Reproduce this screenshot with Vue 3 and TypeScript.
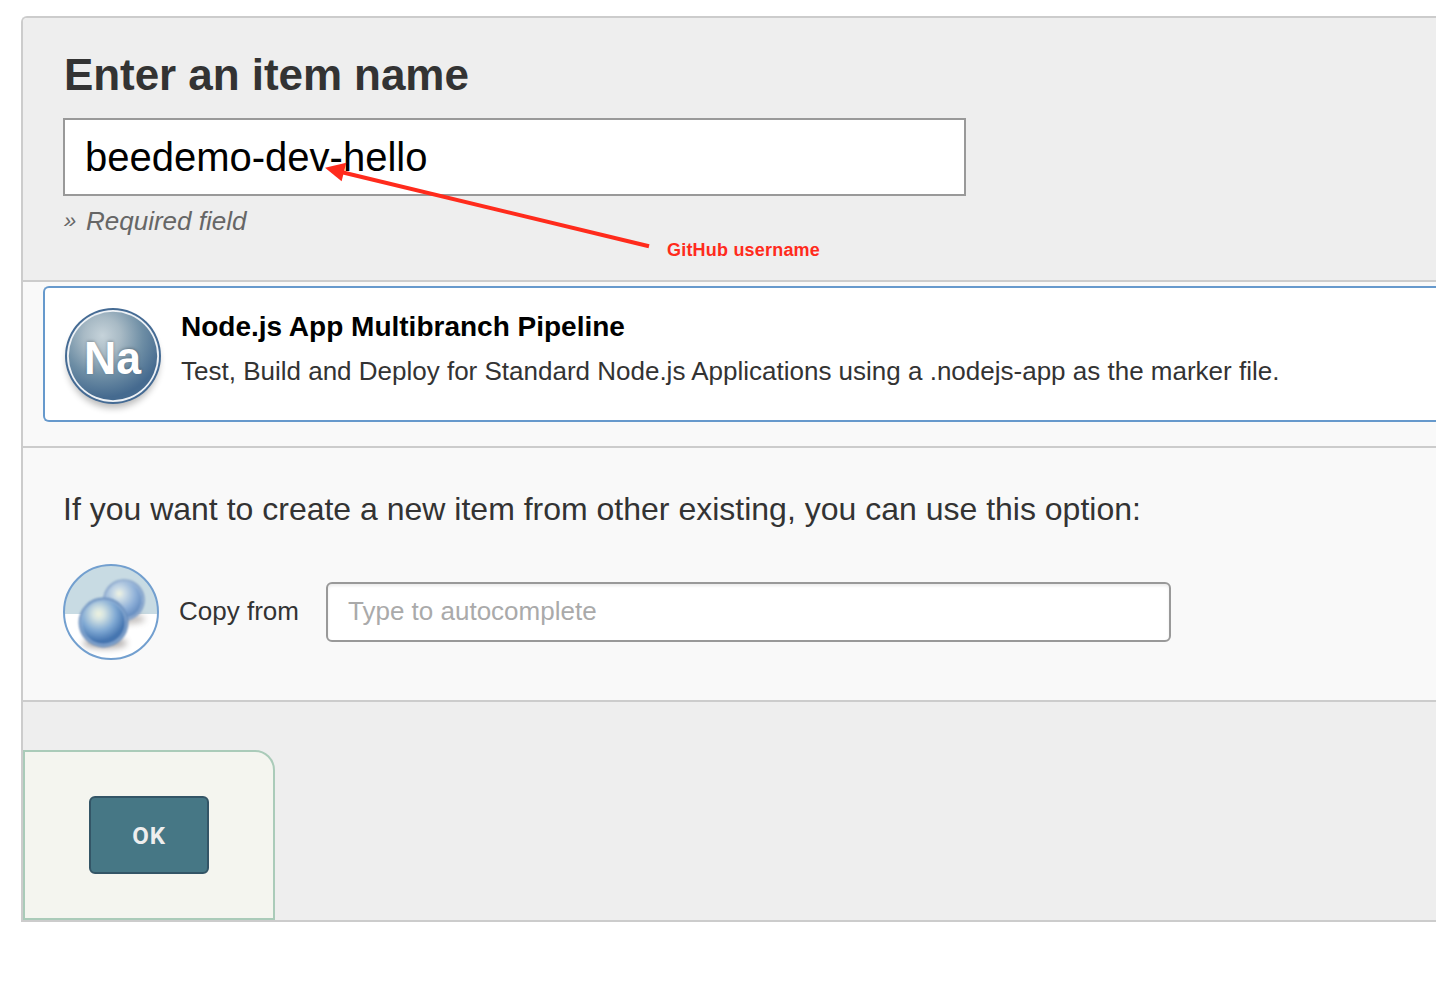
<script setup lang="ts">
import { ref } from 'vue'

const itemName = ref('beedemo-dev-hello')
const copyFrom = ref('')
</script>

<template>
  <main class="panel">
    <section class="name-section">
      <h1 class="title">Enter an item name</h1>
      <input v-model="itemName" class="name-input" type="text" spellcheck="false" />
      <p class="required"><span class="chevrons">»</span>Required field</p>
      <svg class="arrow" width="340" height="100" viewBox="0 0 340 100">
        <path d="M23 13.8 L332 88.3" stroke="#ff2b1c" stroke-width="4" fill="none" />
        <path d="M8 9.7 L29.3 4.7 L24.6 23.2 Z" fill="#ff2b1c" />
      </svg>
      <span class="note">GitHub username</span>
    </section>

    <section class="types">
      <div class="card">
        <svg class="badge" width="112" height="116" viewBox="0 0 112 116">
          <defs>
            <radialGradient id="badgeFill" cx="0.38" cy="0.27" r="0.7">
              <stop offset="0" stop-color="#c6d3da" />
              <stop offset="0.3" stop-color="#a8bac5" />
              <stop offset="0.65" stop-color="#6e8ea5" />
              <stop offset="1" stop-color="#456a8f" />
            </radialGradient>
            <filter id="soft" x="-30%" y="-30%" width="160%" height="160%">
              <feGaussianBlur stdDeviation="3.5" />
            </filter>
          </defs>
          <circle cx="56" cy="60" r="46" fill="#000" opacity="0.27" filter="url(#soft)" />
          <circle cx="56" cy="54" r="48" fill="#456b94" />
          <circle cx="56" cy="54" r="46" fill="#eef2f6" />
          <circle cx="56" cy="54" r="44.2" fill="url(#badgeFill)" />
          <text class="badge-text" x="55.5" y="72" text-anchor="middle" textLength="57" lengthAdjust="spacingAndGlyphs">Na</text>
        </svg>
        <div class="card-text">
          <h2 class="card-title">Node.js App Multibranch Pipeline</h2>
          <p class="card-desc">Test, Build and Deploy for Standard Node.js Applications using a .nodejs-app as the marker file.</p>
        </div>
      </div>
    </section>

    <section class="copy">
      <p class="copy-intro">If you want to create a new item from other existing, you can use this option:</p>
      <div class="copy-row">
        <svg class="copy-icon" width="96" height="96" viewBox="0 0 96 96">
          <defs>
            <clipPath id="disc"><circle cx="48" cy="48" r="47" /></clipPath>
            <radialGradient id="frontBall" cx="0.4" cy="0.32" r="0.68">
              <stop offset="0" stop-color="#eff3df" />
              <stop offset="0.18" stop-color="#d3e2e2" />
              <stop offset="0.52" stop-color="#81aad4" />
              <stop offset="0.85" stop-color="#4272ae" />
              <stop offset="1" stop-color="#4e7cb4" />
            </radialGradient>
            <radialGradient id="backBall" cx="0.38" cy="0.34" r="0.7">
              <stop offset="0" stop-color="#f1f4e1" />
              <stop offset="0.2" stop-color="#ccdce6" />
              <stop offset="0.58" stop-color="#8fb0d8" />
              <stop offset="1" stop-color="#5680b7" />
            </radialGradient>
            <filter id="ballSoft" x="-40%" y="-60%" width="180%" height="220%">
              <feGaussianBlur stdDeviation="3" />
            </filter>
            <filter id="ballEdge">
              <feGaussianBlur stdDeviation="0.8" />
            </filter>
          </defs>
          <g clip-path="url(#disc)">
            <rect width="96" height="96" fill="#fff" />
            <rect width="96" height="50" fill="#c8dbe3" />
            <ellipse cx="65" cy="55" rx="17" ry="5" fill="#7d7470" opacity="0.45" filter="url(#ballSoft)" />
            <g filter="url(#ballEdge)">
              <circle cx="61" cy="36" r="20" fill="url(#backBall)" stroke="#86a3c9" stroke-width="1.6" />
              <circle cx="61" cy="36" r="18.4" fill="none" stroke="#abc3df" stroke-width="1" />
            </g>
            <ellipse cx="42" cy="79" rx="22" ry="6" fill="#5f5753" opacity="0.45" filter="url(#ballSoft)" />
            <g filter="url(#ballEdge)">
              <circle cx="40.5" cy="58.5" r="24" fill="url(#frontBall)" stroke="#6b8fbd" stroke-width="1.8" />
              <circle cx="40.5" cy="58.5" r="22.3" fill="none" stroke="#94b4d9" stroke-width="1.2" />
            </g>
          </g>
          <circle cx="48" cy="48" r="47" fill="none" stroke="#729fcf" stroke-width="2" />
        </svg>
        <label class="copy-label" for="from">Copy from</label>
        <input id="from" v-model="copyFrom" class="copy-input" type="text" placeholder="Type to autocomplete" />
      </div>
    </section>

    <footer class="footer">
      <div class="ok-box">
        <button class="ok" type="button">OK</button>
      </div>
    </footer>
  </main>
</template>

<style>
body {
  margin: 0;
  background: #fff;
  overflow: hidden;
}
</style>

<style scoped>
.panel {
  box-sizing: border-box;
  height: 906px;
  margin: 16px 0 0 21px;
  border: 2px solid #ccc;
  border-right: 0;
  border-radius: 6px 0 0 0;
  background: #f9f9f9;
  color: #333;
  font-family: "Liberation Sans", Arial, sans-serif;
  overflow: hidden;
}
h1, h2, p {
  margin: 0;
}
.name-section {
  position: relative;
  box-sizing: border-box;
  height: 264px;
  padding: 32px 0 0 40px;
  background: #eee;
  border-bottom: 2px solid #ccc;
}
.title {
  padding-left: 1px;
  font-size: 44px;
  line-height: 50px;
  letter-spacing: -0.06px;
  white-space: nowrap;
}
.name-input {
  display: block;
  box-sizing: border-box;
  width: 903px;
  height: 78px;
  margin-top: 18px;
  padding: 0 20px;
  border: 2px solid #999;
  background: #fff;
  color: #000;
  font: 40px "Liberation Sans", Arial, sans-serif;
  outline: none;
}
.required {
  display: flex;
  margin-top: 10px;
  color: #666;
  font-size: 26px;
  line-height: 30px;
  font-style: italic;
}
.chevrons {
  box-sizing: border-box;
  width: 23px;
  padding-left: 1px;
  font-size: 22px;
}
.arrow {
  position: absolute;
  left: 294px;
  top: 140px;
}
.note {
  position: absolute;
  left: 644px;
  top: 221px;
  color: #ff2b1c;
  font-size: 18px;
  line-height: 22px;
  font-weight: bold;
  letter-spacing: 0.2px;
}
.types {
  box-sizing: border-box;
  height: 166px;
  padding: 4px 0 0 20px;
  border-bottom: 2px solid #ccc;
}
.card {
  display: flex;
  box-sizing: border-box;
  height: 136px;
  padding: 12px 0 0 12px;
  border: 2px solid #69c;
  border-right: 0;
  border-radius: 6px 0 0 6px;
  background: #fff;
}
.badge {
  flex: none;
  margin-top: 2px;
}
.badge-text {
  fill: #fff;
  font-size: 46px;
  font-weight: bold;
  text-shadow: 0 -1px 3px rgba(0, 0, 0, 0.25);
}
.card-text {
  padding: 10px 0 0 12px;
  white-space: nowrap;
}
.card-title {
  color: #000;
  font-size: 28px;
  line-height: 34px;
}
.card-desc {
  margin-top: 12px;
  font-size: 26px;
  line-height: 30px;
}
.copy {
  box-sizing: border-box;
  height: 254px;
  padding: 42px 0 0 40px;
  border-bottom: 2px solid #ccc;
}
.copy-intro {
  font-size: 32px;
  line-height: 38px;
  white-space: nowrap;
}
.copy-row {
  display: flex;
  align-items: center;
  margin-top: 36px;
}
.copy-icon {
  flex: none;
}
.copy-label {
  width: 147px;
  padding-left: 20px;
  padding-bottom: 2px;
  font-size: 26px;
  line-height: 30px;
}
.copy-input {
  box-sizing: border-box;
  width: 845px;
  height: 60px;
  padding: 0 20px 2px;
  border: 2px solid #999;
  border-radius: 6px;
  background: #fff;
  box-shadow: inset 0 2px 3px rgba(0, 0, 0, 0.08);
  font: 26px "Liberation Sans", Arial, sans-serif;
  outline: none;
}
.copy-input::placeholder {
  color: #aaa;
  opacity: 1;
}
.footer {
  box-sizing: border-box;
  height: 218px;
  padding-top: 48px;
  background: #eee;
}
.ok-box {
  display: flex;
  align-items: center;
  box-sizing: border-box;
  width: 252px;
  height: 170px;
  padding-left: 64px;
  border: 2px solid #aacbb9;
  border-radius: 0 20px 0 0;
  background: #f4f5ef;
}
.ok {
  width: 120px;
  height: 78px;
  padding: 2px 0 0;
  border: 2px solid #335566;
  border-radius: 6px;
  background: #467785;
  color: #eee;
  font: bold 24px Roboto, sans-serif;
  letter-spacing: 0.8px;
}
</style>
